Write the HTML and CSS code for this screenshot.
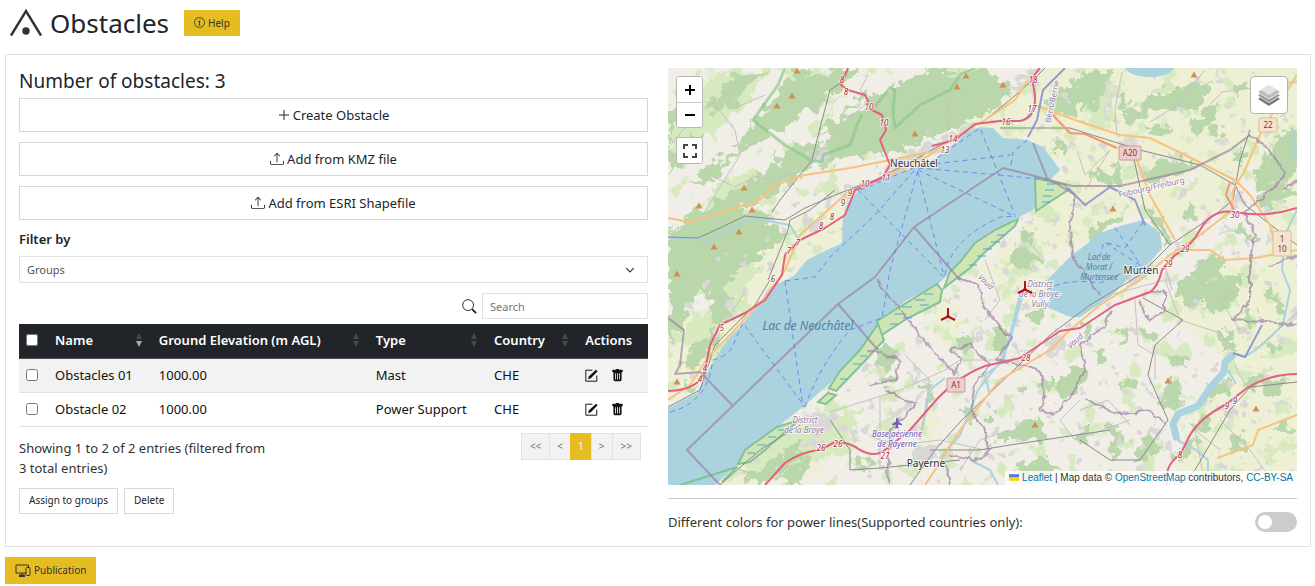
FILE: index.html
```html
<!DOCTYPE html>
<html lang="en">
<head>
  <meta charset="utf-8">
  <meta name="viewport" content="width=device-width, initial-scale=1">
  <title>Obstacles</title>
  <link rel="stylesheet" href="styles.css">
</head>
<body>
  <svg class="sprite" aria-hidden="true">
    <symbol id="upload" viewBox="0 0 16 16">
      <path d="M.5 9.9a.5.5 0 0 1 .5.5v2.5a1 1 0 0 0 1 1h12a1 1 0 0 0 1-1v-2.5a.5.5 0 0 1 1 0v2.5a2 2 0 0 1-2 2H2a2 2 0 0 1-2-2v-2.5a.5.5 0 0 1 .5-.5"/>
      <path d="M7.646 1.146a.5.5 0 0 1 .708 0l3 3a.5.5 0 0 1-.708.708L8.5 2.707V11.500a.5.5 0 0 1-1 0V2.707L5.354 4.854a.5.5 0 1 1-.708-.708z"/>
    </symbol>
    <symbol id="edit" viewBox="0 0 16 16">
      <path d="M9 1.500H1V15H14.500V8" fill="none" stroke="currentColor" stroke-width="1.200"/>
      <path d="M13.500 .8l2 2-8.300 8.500-3.400 1.200 1.100-3.500z"/>
    </symbol>
    <symbol id="trash" viewBox="0 0 16 16">
      <path d="M2.500 1a1 1 0 0 0-1 1v1a1 1 0 0 0 1 1H3v9a2 2 0 0 0 2 2h6a2 2 0 0 0 2-2V4h.5a1 1 0 0 0 1-1V2a1 1 0 0 0-1-1H10a1 1 0 0 0-1-1H7a1 1 0 0 0-1 1zm3 4a.5.5 0 0 1 .5.5v7a.5.5 0 0 1-1 0v-7a.5.5 0 0 1 .5-.5M8 5a.5.5 0 0 1 .5.5v7a.5.5 0 0 1-1 0v-7A.5.5 0 0 1 8 5m3 .5v7a.5.5 0 0 1-1 0v-7a.5.5 0 0 1 1 0"/>
    </symbol>
    <symbol id="sort" viewBox="0 0 8 14">
      <path d="M4 0l3 6H1z"/>
      <path d="M1 8h6l-3 6z"/>
    </symbol>
    <symbol id="sort-desc" viewBox="0 0 8 14">
      <path d="M4 0l3 6H1z" fill="#45494d"/>
      <path d="M1 8h6l-3 6z"/>
    </symbol>
  </svg>

  <header class="page-header">
    <svg class="logo" viewBox="0 0 32 28"><path d="M1 26.500L16 2l15 24.500" fill="none" stroke="#333" stroke-width="2.400"/><circle cx="16" cy="22" r="3.700" fill="#333"/></svg>
    <h1>Obstacles</h1>
    <button class="btn btn-yellow" type="button">
      <svg class="icon-sm" viewBox="0 0 16 16"><circle cx="8" cy="8" r="7.300" fill="none" stroke="currentColor" stroke-width="1.200"/><path d="M6 6.500h2.500L7.400 12h1.800M8.800 3.400v1.400" fill="none" stroke="currentColor" stroke-width="1.400"/></svg>
      Help
    </button>
  </header>

  <main class="panel">
    <section class="column">
      <h2>Number of obstacles: 3</h2>
      <div class="create-group">
        <button class="btn-wide" type="button">
          <svg class="icon-plus" viewBox="0 0 12 12"><path d="M6 1v10M1 6h10" stroke="currentColor"/></svg>
          Create Obstacle
        </button>
        <button class="btn-wide" type="button"><svg class="icon"><use href="#upload"/></svg>Add from KMZ file</button>
        <button class="btn-wide" type="button"><svg class="icon"><use href="#upload"/></svg>Add from ESRI Shapefile</button>
      </div>

      <label class="filter-label" for="groups">Filter by</label>
      <select id="groups" class="filter-select">
        <option>Groups</option>
      </select>

      <div class="search-row">
        <label for="search" aria-label="Search">
          <svg class="icon-search" viewBox="0 0 16 16"><circle cx="6.500" cy="6.500" r="5.800" fill="none" stroke="currentColor"/><path d="M10.800 10.800l4.200 4.200" stroke="currentColor" stroke-width="2"/></svg>
        </label>
        <input type="text" id="search" placeholder="Search">
      </div>

      <table class="obstacles">
        <colgroup>
          <col class="col-check"><col class="col-name"><col class="col-elevation"><col class="col-type"><col class="col-country"><col>
        </colgroup>
        <thead>
          <tr>
            <th><input type="checkbox" aria-label="Select all"></th>
            <th><div class="th-inner">Name <svg class="sort sorted"><use href="#sort-desc"/></svg></div></th>
            <th><div class="th-inner">Ground Elevation (m AGL) <svg class="sort"><use href="#sort"/></svg></div></th>
            <th><div class="th-inner">Type <svg class="sort"><use href="#sort"/></svg></div></th>
            <th><div class="th-inner">Country <svg class="sort"><use href="#sort"/></svg></div></th>
            <th>Actions</th>
          </tr>
        </thead>
        <tbody>
          <tr>
            <td><input type="checkbox" aria-label="Select Obstacles 01"></td>
            <td>Obstacles 01</td>
            <td>1000.00</td>
            <td>Mast</td>
            <td>CHE</td>
            <td>
              <div class="actions">
                <button type="button" aria-label="Edit"><svg><use href="#edit"/></svg></button>
                <button type="button" aria-label="Delete"><svg><use href="#trash"/></svg></button>
              </div>
            </td>
          </tr>
          <tr>
            <td><input type="checkbox" aria-label="Select Obstacle 02"></td>
            <td>Obstacle 02</td>
            <td>1000.00</td>
            <td>Power Support</td>
            <td>CHE</td>
            <td>
              <div class="actions">
                <button type="button" aria-label="Edit"><svg><use href="#edit"/></svg></button>
                <button type="button" aria-label="Delete"><svg><use href="#trash"/></svg></button>
              </div>
            </td>
          </tr>
        </tbody>
      </table>

      <div class="table-footer">
        <p>Showing 1 to 2 of 2 entries (filtered from 3 total entries)</p>
        <nav class="pagination" aria-label="Pages">
          <button type="button">&lt;&lt;</button>
          <button type="button">&lt;</button>
          <button type="button" class="active">1</button>
          <button type="button">&gt;</button>
          <button type="button">&gt;&gt;</button>
        </nav>
      </div>

      <div class="bulk-actions">
        <button class="btn btn-outline" type="button">Assign to groups</button>
        <button class="btn btn-outline" type="button">Delete</button>
      </div>
    </section>

    <section class="column">
      <div class="map">
        <svg class="map-tiles" viewBox="668 68 629 417" preserveAspectRatio="xMidYMid slice" role="img" aria-label="Map of Lac de Neuchâtel">
          <defs>
            <filter id="rough" x="-5%" y="-5%" width="110%" height="110%">
              <feTurbulence type="fractalNoise" baseFrequency=".09" numOctaves="3" seed="4" result="noise"/>
              <feDisplacementMap in="SourceGraphic" in2="noise" scale="24" xChannelSelector="R" yChannelSelector="G"/>
            </filter>
            <filter id="wiggle" x="-5%" y="-5%" width="110%" height="110%">
              <feTurbulence type="fractalNoise" baseFrequency=".12" numOctaves="2" seed="9" result="noise"/>
              <feDisplacementMap in="SourceGraphic" in2="noise" scale="7" xChannelSelector="R" yChannelSelector="G"/>
            </filter>
            <filter id="speckle" x="0" y="0" width="100%" height="100%" color-interpolation-filters="sRGB">
              <feTurbulence type="fractalNoise" baseFrequency=".05" numOctaves="4" seed="12"/>
              <feColorMatrix values="0 0 0 0 0  0 0 0 0 0  0 0 0 0 0  14 0 0 0 -8.400" result="spots"/>
              <feComposite in="SourceGraphic" in2="spots" operator="in"/>
            </filter>
            <filter id="speckle-fine" x="0" y="0" width="100%" height="100%" color-interpolation-filters="sRGB">
              <feTurbulence type="fractalNoise" baseFrequency=".08" numOctaves="3" seed="31"/>
              <feColorMatrix values="0 0 0 0 0  0 0 0 0 0  0 0 0 0 0  0 16 0 0 -10.900" result="spots"/>
              <feComposite in="SourceGraphic" in2="spots" operator="in"/>
            </filter>
            <path id="peak" d="M0-3.500L3.500 2.500h-7z"/>
            <g id="turbine"><path d="M0-7V1.500M0 1.500L-7 5M0 1.500L7 5" fill="none" stroke="#b0121b" stroke-width="2"/><circle cy="1.500" r="1.800" fill="#b0121b"/></g>
          </defs>

          <rect x="668" y="68" width="629" height="417" fill="#f1eee8"/>

          <!-- farmland -->
          <g class="farmland" filter="url(#rough)">
            <path d="M960 125L1040 60H1310V150L1240 175 1215 215 1160 225 1140 210 1100 230 1040 260 975 285 1000 250 1050 200 1062 165 1030 145z"/>
            <path d="M668 395V325L720 300 770 240 800 215 850 200 845 240 780 280 740 325 700 380z"/>
            <path d="M935 290L955 300 965 340 945 345 930 320zM985 265L1040 245 1045 300 1010 310z"/>
            <path d="M1160 310L1205 262 1300 270V485H1170L1180 450 1200 400 1240 360 1200 340z"/>
            <path d="M715 485L800 430 850 440 800 485zM910 420l20-15 10 20-15 30zM1270 170L1300 150V280H1260z"/>
          </g>

          <!-- meadows -->
          <g class="meadow" filter="url(#rough)">
            <path d="M668 165V120L720 72 780 68 760 95 715 130zM690 220L720 180 765 170 745 200zM668 275V238L700 225 710 260z"/>
            <path d="M668 340L710 305 735 245 755 255 745 300 710 350zM780 68H850L800 130 770 125zM880 120L940 68H985L925 120zM1085 80L1110 70 1110 130 1085 120z"/>
            <path d="M740 465L800 425 860 410 850 440 790 475zM800 120L845 90 840 100 815 140zM1015 260L1050 240 1035 270 1005 285z"/>
          </g>
          <rect class="meadow" x="668" y="68" width="629" height="417" filter="url(#speckle)"/>

          <!-- forest -->
          <g class="forest" filter="url(#rough)">
            <path d="M668 230L720 200 800 150 860 95 880 68H960L940 85 900 115 885 150 840 160 800 180 750 205 700 225z"/>
            <path d="M668 345V235L700 215 755 210 790 235 740 270 715 300 700 290z"/>
            <path d="M668 140L690 100 690 90 668 110zM690 185L770 105 795 68H808L790 110 750 150 730 175z"/>
            <path d="M757 122L800 80 830 68H862L840 90 810 115 775 130zM770 160L830 130 860 135 820 165z"/>
            <path d="M668 160L695 130 700 145 672 175zM700 110l35-35 35-7-40 40z"/>
            <path d="M886 155L890 120 930 85 985 68 1000 80 1012 92 990 110 960 125 920 143z"/>
            <path d="M1040 105L1095 68H1110L1100 95 1060 120zM1080 70H1110L1098 105 1085 112z"/>
            <path d="M1115 115L1190 80 1215 85 1195 108 1155 110 1130 125zM1190 125L1217 100 1217 120 1195 140z"/>
            <path d="M1145 170L1185 155 1190 170 1160 180 1140 183zM1100 180L1120 155 1118 190zM1092 225L1125 212 1120 225 1085 240z"/>
            <path d="M1255 180L1275 135 1300 130V160L1285 200 1260 210zM1145 205L1165 225 1175 245 1165 248z"/>
            <path d="M1195 265L1220 250 1225 285 1190 310 1175 290zM1200 290L1245 270 1235 300 1215 320z"/>
            <path d="M1196 285L1240 280 1235 298 1210 315zM1222 330L1235 325 1237 345 1222 350z"/>
            <path d="M1170 375L1185 385 1180 410 1155 400zM1108 425L1120 425 1122 450 1110 455zM1058 400L1080 390 1090 370 1075 365 1055 385z"/>
            <path d="M1000 430L1040 415 1045 440 1000 440zM1020 463L1050 455 1060 470 1030 485H1010zM880 345L900 345 890 370 875 365z"/>
            <path d="M740 475L775 458 800 440 805 455 760 485zM770 480L810 455 805 485zM1000 195L1030 175 1045 190 1020 210z"/>
            <path d="M690 345L720 325 715 350 700 365 680 370zM710 290l25 5-8 25-15 5zM1010 255L1030 240 1040 262 1015 275z"/>
            <path d="M1060 270l30-12v12l-25 10zM1135 445l20-8 5 15-25 10zM1210 385l20-6-5 18-18 3zM1255 375l35 8-12 12-30-8z"/>
            <path d="M1180 445l20-5-4 15-22 4zM1230 440l14-5-4 20-14-4zM1120 265l15 8-12 8z"/>
            <path d="M960 340l12-3-4 18-9-2zM917 380l12 2-6 10zM1080 330l15-8-5 15z"/>
          </g>

          <!-- clearings -->
          <g class="clearing" filter="url(#rough)">
            <path d="M690 218L740 150 765 143 720 185zM718 170L780 90 790 68H772L740 110zM765 145L805 110 835 105 790 145zM805 140l25-12-8 18zM890 92l35-24H870l-15 20z"/>
            <path d="M1172 180l30-10-6 10zM1110 360l20-10-8 15zM862 440l15 7-16 8zM1195 228l15-4-10 12z"/>
            <path d="M735 125l22-25 4 6-20 24zM840 118l25-22 6 8-26 18zM798 172l24-9-5 12-16 5z"/>
          </g>

          <!-- towns -->
          <g class="town" filter="url(#rough)">
            <path d="M885 165L950 135 975 125 970 133 930 155 885 175zM840 190l30-10-6 12-18 10zM803 220l25-8-20 22zM812 155l12-8 4 15-16 5zM1007 85l25-15 10 8-22 12z"/>
            <path d="M1119 137h18l-2 14-17 2zM1165 150h20l-10 9zM1232 190l12 5-8 17zM1140 265l15-3-14 22-12-2zM1043 345l18-15 4 18-20 8zM918 450l24-7-2 18-30 6z"/>
            <path d="M798 418l35-6 6 12-24 15zM903 372l20-2-8 8zM878 418l24-12 10 4-24 8zM1146 385l15 15-10-3zM1224 405l14-7-2 20-12-2zM1283 315l14-6v18z"/>
            <path d="M966 333l18-2-6 12zM860 433l12-7-4 14zM940 302l12-7v8zM1008 363l20-10-6 12zM1105 90l14 3-10 12zM1150 425l12 5-10 8zM1222 223l8 10-10 3z"/>
          </g>
          <path class="town" filter="url(#speckle-fine)" d="M668 300L760 220 900 150 1010 70H1297V485H668z"/>

          <!-- small groves scattered over the farmland -->
          <g class="groves" filter="url(#rough)">
            <path d="M1000 330v18M1015 392h12M1030 320l14-8M985 420h12M1085 430v14M1140 330l14 7M1165 360h20M1190 425h20M1240 435v18M1270 340v14M1280 425l12 8M860 462h16M880 382h16M930 390v12M960 412h13M1120 385h14M1125 330v16M1250 310v16M1270 290l10 20M1100 350v14"/>
            <path d="M1060 140v16M1090 175h14M1125 95v14M1150 130h18M1235 90l14-8M1210 135l10-6M1240 225l10 16M1190 205v14M1020 235h16M1245 150l-9 12M1040 385l14-5M715 230v10M690 385v10M740 345l10-10"/>
          </g>

          <!-- water -->
          <path class="water" d="M668 408L697 393 710 367 727 340 740 327 757 307 770 287 793 277 807 260 827 250 842 243 843 217 848 203 860 190 880 181 897 173 930 163 950 147 967 132 980 127 993 128 1003 138 1027 140 1043 147 1053 160 1060 170 1050 180 1043 197 1033 210 1017 218 997 230 970 250 950 273 937 285 907 300 880 320 860 350 830 383 803 407 777 427 757 440 737 465 715 485H668z"/>
          <path class="water" d="M1047 280L1070 257 1088 243 1100 233 1120 226 1143 220 1160 233 1162 248 1152 260 1130 277 1110 297 1080 317H1070L1047 307 1051 293zM1125 68q6 9 25 9t24-9z"/>
          <g class="river">
            <path class="river-wide" d="M1234 354L1225 362 1224 372 1210 388 1198 406 1178 414 1173 424 1177 440"/>
            <path d="M1177 440L1196 450 1208 460 1208 482M1024 290L1010 340 1000 362 978 390 970 410 960 435 940 458M1020 295L1003 362 985 375 990 395M945 378L930 390 922 430M668 238L700 238 705 243 750 218 790 225 800 242"/>
            <path d="M1295 130L1291 146 1299 165M1297 210L1285 235 1282 270 1290 290 1283 325 1262 345 1245 357 1233 353M970 460L990 470 998 485M1228 370l8 14"/>
          </g>

          <!-- reserves along the shore -->
          <g class="reserve">
            <path d="M1035 178L1065 185 1068 190 1036 211z"/>
            <path d="M877 321L937 284 942 290 940 302 908 318 880 336z"/>
            <path d="M944 288L970 268 985 252 1015 226 1018 219 995 230 975 243 960 262 950 272z"/>
            <path d="M878 324L860 350 840 371 829 388 836 391 862 364 884 340z"/>
            <path d="M818 402l10-9 8 2-10 9z"/>
            <path d="M738 464L745 450 777 427 800 420 785 432 765 450 750 462z"/>
            <path class="reserve-line" d="M680 485L737 467 722 482"/>
          </g>
          <g class="reed">
            <path d="M1047 184h8m-10 6h9m-11 6h9m-10 6h8"/>
            <path d="M997 235h8m-14 7h9m-17 7h9m-15 7h9m-17 9h8"/>
            <path d="M924 294h9m-18 6h10m-5 5h9m-27 2h10m-18 7h10m-1 4h9m-22 6h8"/>
            <path d="M860 356h7m-14 8h8m-21 15h8m-70 51h8m-18 7h8m-19 8h9m-19 8h8"/>
          </g>

          <!-- minor roads -->
          <path class="minor" d="M668 148L700 110 760 75M700 219L740 155 735 130 715 105M668 157L702 150M710 175L735 187 757 176 770 180 800 172M765 95L735 108M880 110L860 90 868 75M810 165L840 125 865 105M720 330L745 292M949 98V130"/>
          <path class="minor" d="M1117 135L1115 110 1122 72M1150 122L1175 107 1205 70M1200 115L1222 92 1297 82M1085 190L1110 150 1085 175 1077 150M1110 295L1165 280 1180 320 1220 333 1235 352M1135 300L1138 345 1155 355 1155 380M1220 420L1250 450 1275 485M1165 265L1172 290M1235 365L1245 385"/>
          <path class="minor" d="M1020 230L1030 243 1045 260M830 412L900 390 945 370 960 360 1010 360M870 437L900 445 940 440 985 450M880 395L880 470M985 320L1000 300 985 260M1080 400L1060 420 1075 440 1130 420M1130 425L1108 400 1080 410M1220 450L1195 430 1205 485M1255 350L1300 310M1240 330L1220 300 1240 290M960 470L980 440 1010 430M905 355L930 380 920 440"/>

          <!-- railways -->
          <path class="rail" d="M668 237L698 238 720 228 745 216 785 220 805 208 840 193 875 180 905 165 950 140 985 120 1010 100 1035 78 1045 68M820 128L830 90 845 80M820 128L812 160 780 200 772 212M768 280L788 230 790 220 810 210 835 190M1000 128L1070 128 1140 150 1200 165 1235 185 1245 205 1297 245M770 280L755 305 715 345 700 390 668 407"/>
          <path class="rail" d="M1132 150L1145 210 1170 245M1250 130L1240 160 1233 200 1215 215 1170 245 1140 275 1090 305 1050 335 960 422 935 450 910 485M1143 298L1183 320 1155 345 1148 375 1168 420 1140 460 1110 460 1080 440M720 485L760 450 800 425M830 420L850 450 850 470 880 468 960 460M930 450L980 450 1010 445 1110 430M1297 382L1250 387 1230 410 1195 470 1180 485"/>

          <!-- secondary roads -->
          <path class="primary" d="M668 218L690 222 730 210 760 200 775 185 805 175 850 168 880 162 930 152M760 305L785 270 800 235 845 195 890 175 930 155 950 140 985 120 1015 100 1028 80M668 400L690 385 710 355 730 335 760 302M1035 105L1075 120 1120 135 1150 138 1185 155 1235 180 1250 195 1270 225 1275 245M1135 155L1150 195 1175 240"/>
          <path class="primary" d="M1297 75L1262 130 1245 170 1233 190 1232 210 1200 235 1170 255 1140 280 1100 305 1070 330 1050 350 1000 380 960 430 935 470 925 485M1175 250L1210 250 1225 260 1255 258 1297 250M1217 458L1253 445 1258 430 1297 415"/>
          <path class="trunk" d="M1050 112L1070 133 1085 134 1117 148M1230 182L1226 195 1234 210"/>

          <!-- ridge trails -->
          <path class="trail" d="M785 68L778 85 753 120 785 145 810 160 822 162 823 155 850 145 857 125 862 114M870 112L890 88 895 90 893 112 895 128 920 105 950 90 960 75 975 68"/>

          <!-- ferry lines -->
          <g class="ferry">
            <path d="M670 412Q700 405 710 375L713 360Q732 355 735 340L743 323 805 407M785 281L803 407M785 281L815 277 830 257 875 215 920 164M805 407Q820 365 850 330L882 318 890 270 918 170M918 170L1016 217M918 168L1000 175 1048 180M918 166L1010 155M1011 165L1013 152 1030 138M918 172L943 272M858 190L945 278M945 275Q950 240 1000 217L1016 216M930 163L980 128 1015 215M860 190L920 165"/>
            <path d="M1140 265L1104 242 1098 262M1143 222L1125 248 1104 242M1115 228L1141 265M1047 290Q1065 278 1100 283L1140 265"/>
          </g>

          <!-- cantonal and district boundaries -->
          <g class="boundary">
            <path d="M668 318L684 330 680 365 675 374 700 372 732 405M720 485L687 450 838 304 875 277 914 227 1003 168 1050 180 1072 186 1120 186 1190 170 1230 150 1250 135"/>
            <path d="M838 304L878 350M914 227L960 280M1033 143L1047 178 1075 195"/>
          </g>
          <g class="boundary" filter="url(#wiggle)">
            <path d="M875 278L910 322 925 342 955 375 960 358 950 350 970 345 990 365 975 385 970 410 985 430 990 450 980 460 950 455M958 278L980 285 982 305 1012 340 995 360 1025 365 1040 370 1045 395 1040 410 1055 415 1075 390 1085 370 1080 345 1105 325 1110 310"/>
            <path d="M868 350L900 360 895 380 870 385M885 390L915 405 890 430 888 485M945 460L950 485M1075 195L1070 225 1072 255 1100 295M1250 135L1270 150 1285 175 1260 200 1245 212 1255 235 1250 260 1250 300 1232 320 1265 322 1297 325M1270 265L1300 255M1140 295L1165 290 1165 310 1150 320 1138 300M1297 180L1285 188M1085 400L1120 415 1150 410 1165 425"/>
          </g>
          <path class="canal" d="M1065 68L1043 90 1037 120 1028 137M1068 188L1085 205 1110 187 1135 200 1145 225M1262 325L1245 357 1233 353"/>

          <!-- motorways -->
          <path class="motorway" d="M848 68L841 85 848 90 865 95 872 110 882 115 886 130 880 140 890 165 882 178 855 190 845 215 825 228 800 240 785 255 782 275 765 300 745 313 720 325 710 345 705 370Q700 390 668 391"/>
          <path class="motorway" d="M932 146L955 140 975 124 1000 121 1020 121Q1036 118 1035 95L1032 78 1040 68M765 485L785 463Q800 452 820 450L835 442Q850 442 860 450Q875 458 885 450L910 430 938 398Q960 375 985 366L1020 358 1060 331 1080 328 1115 305 1150 292Q1158 287 1162 270L1175 255Q1190 248 1200 230Q1212 208 1235 212Q1265 218 1297 208M1167 485Q1164 465 1180 455L1190 435Q1200 418 1225 405L1247 388Q1270 374 1297 374"/>

          <!-- peaks -->
          <g fill="#d08f55">
            <use href="#peak" x="797" y="71"/><use href="#peak" x="792" y="96"/><use href="#peak" x="777" y="106"/><use href="#peak" x="744" y="188"/><use href="#peak" x="699" y="206"/><use href="#peak" x="752" y="210"/><use href="#peak" x="739" y="232"/><use href="#peak" x="714" y="247"/><use href="#peak" x="677" y="274"/><use href="#peak" x="677" y="382"/>
            <use href="#peak" x="966" y="76"/><use href="#peak" x="957" y="87"/><use href="#peak" x="1003" y="85"/><use href="#peak" x="915" y="134"/><use href="#peak" x="1194" y="75"/><use href="#peak" x="1113" y="209"/><use href="#peak" x="1168" y="381"/><use href="#peak" x="1256" y="409"/><use href="#peak" x="1035" y="425"/>
          </g>

          <!-- motorway exits -->
          <g class="exit">
            <text x="842" y="83">8</text><text x="846" y="95">8</text><text x="869" y="110">10</text><text x="884" y="126">10</text><text x="865" y="187">10</text><text x="886" y="181">11</text><text x="945" y="153">13</text><text x="953" y="142">14</text><text x="1006" y="125">16</text><text x="1032" y="112">17</text><text x="1033" y="83">18</text>
            <text x="850" y="196">9</text><text x="843" y="206">9</text><text x="832" y="220">8</text><text x="821" y="229">8</text><text x="798" y="246">7</text><text x="789" y="254">7</text><text x="773" y="282">6</text><text x="722" y="331">5</text><text x="705" y="371">4</text><text x="700" y="382">4</text>
            <text x="821" y="451">26</text><text x="838" y="447">26</text><text x="885" y="459">27</text><text x="1026" y="361">28</text><text x="1185" y="252">29</text><text x="1168" y="267">29</text><text x="1235" y="218">30</text><text x="1227" y="409">9</text><text x="1235" y="404">9</text><text x="1180" y="458">8</text>
          </g>

          <!-- road shields -->
          <g class="shield">
            <rect x="1119" y="146" width="22" height="14" rx="1"/><text x="1130" y="156">A20</text>
            <rect x="947" y="378" width="18" height="14" rx="1"/><text x="956" y="388">A1</text>
            <rect class="light" x="1259" y="118" width="18" height="14" rx="1"/><text x="1268" y="128">22</text>
            <rect class="light" x="1273" y="231" width="18" height="25" rx="1"/><text x="1282" y="242">1</text><text x="1282" y="252">10</text>
          </g>

          <!-- place names -->
          <g class="place">
            <text x="914" y="167">Neuchâtel</text><text x="1141" y="274">Murten</text><text x="926" y="467">Payerne</text>
          </g>
          <g class="lake-name">
            <text class="large" x="808" y="330">Lac de Neuchâtel</text>
            <text x="1099" y="260">Lac de</text><text x="1099" y="270">Morat /</text><text x="1099" y="280">Murtensee</text>
          </g>
          <g class="district">
            <text x="805" y="423">District</text><text x="804" y="433">de la Broye</text>
            <text x="1040" y="287">District</text><text x="1040" y="297">de la Broye-</text><text x="1040" y="307">Vully</text>
            <text transform="translate(984 284) rotate(45)">Vaud</text><text transform="translate(1077 343) rotate(-43)">Vaud</text>
            <text class="canton" transform="translate(1152 190) rotate(-13)">Fribourg/Freiburg</text><text class="canton" transform="translate(1055 102) rotate(-78)">Bern/Berne</text>
          </g>
          <g class="airport">
            <text x="897" y="437">Base aérienne</text><text x="897" y="447">de Payerne</text>
            <path d="M897 417l1 2v2.500l4 2.500v1.200l-4-.8v2.500l1.500 1.300h-5l1.500-1.300v-2.500l-4 .8V424l4-2.500v-2.500z"/>
          </g>

          <use href="#turbine" x="948" y="315"/>
          <use href="#turbine" x="1025" y="288"/>
        </svg>

        <div class="map-controls">
          <div class="map-bar">
            <button type="button" aria-label="Zoom in"><svg viewBox="0 0 12 12"><path d="M6 1v10M1 6h10"/></svg></button>
            <button type="button" aria-label="Zoom out"><svg viewBox="0 0 12 12"><path d="M1 6h10"/></svg></button>
          </div>
          <div class="map-bar">
            <button type="button" aria-label="Full screen"><svg class="fullscreen" viewBox="0 0 14 14"><path d="M1 5V1h4M9 1h4v4M13 9v4H9M5 13H1V9"/></svg></button>
          </div>
        </div>
        <button class="map-layers" type="button" aria-label="Layers">
          <svg viewBox="0 0 26 26">
            <path d="M2 17l11 7 11-7-2-1.500-9 5.500-9-5.500z" fill="#777"/>
            <path d="M2 13.500l11 7 11-7-2-1.500-9 5.500L4 12z" fill="#999"/>
            <path d="M13 3l11 7-11 7-11-7z" fill="#bbb"/>
            <path d="M13 3l8 5-8 5-8-5z" fill="#e2e2e2"/>
          </svg>
        </button>
        <div class="map-credit">
          <svg viewBox="0 0 12 8"><path d="M0 0h12v4H0z" fill="#4c7be1"/><path d="M0 4h12v4H0z" fill="#ffd500"/></svg>
          <a href="#">Leaflet</a> | Map data © <a href="#">OpenStreetMap</a> contributors, <a href="#">CC-BY-SA</a>
        </div>
      </div>

      <div class="map-option">
        <label for="power-colors">Different colors for power lines(Supported countries only):</label>
        <input type="checkbox" id="power-colors" class="switch">
      </div>
    </section>
  </main>

  <button class="btn btn-yellow btn-publication" type="button">
    <svg class="icon-devices" viewBox="0 0 16 14"><path d="M11 10H1V2h12.500v2M4 12.500h6M7 10v2.500" fill="none" stroke="currentColor"/><rect x="11" y="4.500" width="4" height="8" rx="1" fill="none" stroke="currentColor"/><path d="M4 11.500h6V14H4z"/></svg>
    Publication
  </button>
</body>
</html>
```
FILE: styles.css
```css
* {
  box-sizing: border-box;
}

body {
  margin: 0;
  padding: 9px 4px 2px 5px;
  font-family: "Noto Sans", "Open Sans", sans-serif;
  font-size: 13px;
  line-height: 20px;
  color: #212529;
  background: #fff;
}

button,
input,
select {
  font-family: inherit;
  color: inherit;
}

button {
  cursor: pointer;
}

svg {
  fill: currentColor;
}

.sprite {
  display: none;
}

/* Header */
.page-header {
  display: flex;
  align-items: center;
  height: 28px;
  margin-bottom: 17px;
  padding-left: 5px;
}

.logo {
  width: 32px;
  height: 28px;
}

h1 {
  margin: 0 15px 0 8px;
  font-size: 26px;
  line-height: 28px;
  font-weight: 400;
}

h2 {
  margin: 0 0 4px;
  font-size: 19px;
  line-height: 26px;
  font-weight: 400;
}

.btn {
  display: inline-flex;
  align-items: center;
  justify-content: center;
  height: 26px;
  padding: 0 9px 1px;
  border: 1px solid #dee2e6;
  background: #fff;
  font-size: 10px;
}

.btn-yellow {
  gap: 3px;
  border-color: #e6bd21;
  background: #e6bd21;
  color: #333;
}

.btn-publication {
  height: 27px;
  margin-top: 10px;
}

.btn-outline {
  border-color: #d8dadd;
}

.icon-sm {
  width: 11px;
  height: 11px;
}

.icon-devices {
  width: 16px;
  height: 14px;
}

/* Main panel */
.panel {
  display: grid;
  grid-template-columns: 1fr 1fr;
  gap: 20px;
  padding: 13px 13px 14px;
  border: 1px solid #dee2e6;
}

.create-group {
  display: grid;
  gap: 10px;
}

.btn-wide {
  display: flex;
  align-items: center;
  justify-content: center;
  gap: 3px;
  height: 34px;
  padding: 0 6px 1px;
  border: 1px solid #d5d7da;
  background: #fff;
  font-size: 13px;
}

.icon {
  width: 14px;
  height: 14px;
}

.icon-plus {
  width: 12px;
  height: 12px;
}

.filter-label {
  display: block;
  margin: 9px 0 7px;
  font-weight: 600;
}

.filter-select {
  display: block;
  width: 100%;
  height: 27px;
  padding: 0 7px;
  border: 1px solid #dee2e6;
  border-radius: 0;
  appearance: none;
  background: #fff url("data:image/svg+xml,%3Csvg xmlns='http://www.w3.org/2000/svg' viewBox='0 0 16 16'%3E%3Cpath fill='none' stroke='%23343a40' stroke-width='2' d='M2 5l6 6 6-6'/%3E%3C/svg%3E") no-repeat right 12px center / 10px;
  color: #555;
  font-size: 11px;
}

.search-row {
  display: flex;
  align-items: center;
  justify-content: flex-end;
  gap: 5px;
  margin: 10px 0 5px;
}

.search-row label {
  display: flex;
}

.search-row input {
  width: 166px;
  height: 26px;
  padding: 0 7px;
  border: 1px solid #dee2e6;
  font-size: 11px;
}

.icon-search {
  width: 15px;
  height: 15px;
}

/* Table */
.obstacles {
  width: 100%;
  table-layout: fixed;
  border-collapse: collapse;
  color: #111;
}

.col-check { width: 28px; }
.col-name { width: 16.5%; }
.col-elevation { width: 34.5%; }
.col-type { width: 18.8%; }
.col-country { width: 14.5%; }

.obstacles th,
.obstacles td {
  height: 34px;
  padding: 0 8px;
  border-bottom: 1px solid #dee2e6;
  text-align: left;
  white-space: nowrap;
}

.obstacles th {
  padding-bottom: 2px;
  border-bottom-color: #4d5154;
  background: #212529;
  color: #fff;
  font-weight: 600;
}

.obstacles tbody tr:nth-child(odd) {
  background: #f2f2f2;
}

.obstacles th:first-child,
.obstacles td:first-child {
  padding-left: 7px;
}

.obstacles input {
  display: block;
  width: 12px;
  height: 12px;
  margin: 0;
}

.th-inner {
  display: flex;
  align-items: center;
  justify-content: space-between;
}

.sort {
  width: 8px;
  height: 14px;
  color: #45494d;
}

.sort.sorted {
  color: #aaa;
}

.actions {
  display: flex;
  gap: 13px;
}

.actions button {
  display: flex;
  padding: 0;
  border: 0;
  background: none;
}

.actions svg {
  width: 13px;
  height: 13px;
}

.table-footer {
  display: flex;
  justify-content: space-between;
  align-items: flex-start;
  margin-bottom: 10px;
  padding: 6px 7px 0 0;
}

.table-footer p {
  width: 250px;
  margin: 5px 0 0;
  color: #333;
}

.pagination {
  display: flex;
}

.pagination button {
  height: 27px;
  padding: 0 7px;
  border: 1px solid #dee2e6;
  border-right-width: 0;
  background: #f2f2f2;
  color: #777;
  font-size: 10px;
}

.pagination button:first-child,
.pagination button:last-child {
  padding: 0 8px;
}

.pagination button:last-child {
  border-right-width: 1px;
}

.pagination .active {
  border-color: #e6bd21;
  background: #e6bd21;
  color: #fff;
}

.bulk-actions {
  display: flex;
  gap: 6px;
}

/* Map */
.map {
  position: relative;
  height: 417px;
  overflow: hidden;
  background: #f1eee8;
}

.map-tiles {
  display: block;
  width: 100%;
  height: 100%;
}

.farmland { fill: #eef0d5; }
.meadow { fill: #d7eabf; }
.forest { fill: #bad7ac; }
.clearing { fill: #f1eee8; }
.town { fill: #d9d8d6; }
.water { fill: #aad3df; }

.groves {
  fill: none;
  stroke: #bad7ac;
  stroke-width: 9;
}

.river,
.minor,
.rail,
.primary,
.trunk,
.trail,
.ferry,
.boundary,
.canal,
.motorway,
.reed {
  fill: none;
  stroke-linejoin: round;
}

.river { stroke: #aad3df; stroke-width: 2; }
.river-wide { stroke-width: 7; }
.minor { stroke: #c4c2c2; stroke-width: 1; }
.rail { stroke: #8a8a88; stroke-width: 1; }
.primary { stroke: #f8c27c; stroke-width: 2; }
.trunk { stroke: #f79475; stroke-width: 2; }
.trail { stroke: #8ec78f; stroke-width: 3; opacity: .7; }
.ferry { stroke: #7187ee; stroke-width: 1; stroke-dasharray: 5 4; }
.boundary { stroke: #9b7ba0; stroke-width: 2; opacity: .65; }
.canal { stroke: #7f86cf; stroke-width: 2; opacity: .8; }
.motorway { stroke: #e4607f; stroke-width: 2; }
.reed { stroke: #4da6e0; stroke-width: 1; }

.reserve {
  fill: #cfe6b4;
  stroke: #83c197;
  stroke-width: 2;
}

.reserve-line {
  fill: none;
}

.map-tiles text {
  text-anchor: middle;
  paint-order: stroke;
  stroke: rgba(255, 255, 255, .7);
  stroke-width: 2px;
  font-size: 8px;
}

.exit { fill: #a8303f; font-style: italic; }
.map-tiles .shield text { fill: #704038; stroke: none; }
.shield rect { fill: #f0cccb; stroke: #cf9a95; }
.shield .light { fill: #f6e3ce; stroke: #d9bd9a; }
.map-tiles .place text { fill: #333; font-size: 10px; }
.lake-name { fill: #5380aa; font-style: italic; }
.map-tiles .lake-name text { stroke: none; }
.map-tiles .lake-name .large { font-size: 12px; }
.district { fill: #997aa6; font-style: italic; }
.map-tiles .canton { font-size: 8px; font-style: normal; }
.airport { fill: #7359b9; font-style: italic; }

.map-controls {
  position: absolute;
  top: 8px;
  left: 8px;
  display: grid;
  gap: 9px;
}

.map-bar {
  border: 1px solid #b8b8b0;
  border-radius: 3px;
  background: #fff;
  overflow: hidden;
}

.map-bar button {
  display: flex;
  align-items: center;
  justify-content: center;
  width: 25px;
  height: 25px;
  padding: 0;
  border: 0;
  background: #fff;
}

.map-bar button + button {
  border-top: 1px solid #ccc;
}

.map-bar svg {
  width: 12px;
  height: 12px;
  fill: none;
  stroke: #000;
  stroke-width: 2;
}

.map-bar .fullscreen {
  width: 14px;
  height: 14px;
  stroke: #444;
}

.map-layers {
  position: absolute;
  top: 8px;
  right: 9px;
  display: flex;
  align-items: center;
  justify-content: center;
  width: 38px;
  height: 38px;
  padding: 0;
  border: 1px solid #b5b5aa;
  border-radius: 4px;
  background: #fff;
}

.map-layers svg {
  width: 26px;
  height: 26px;
}

.map-credit {
  position: absolute;
  right: 0;
  bottom: 0;
  padding: 0 4px;
  background: rgba(255, 255, 255, .8);
  color: #333;
  font-family: "Liberation Sans", Arial, sans-serif;
  font-size: 10px;
  line-height: 14px;
}

.map-credit svg {
  width: 10px;
  height: 7px;
}

.map-credit a {
  color: #0078a8;
  text-decoration: none;
}

.map-option {
  display: flex;
  align-items: center;
  justify-content: space-between;
  margin-top: 13px;
  padding-top: 13px;
  border-top: 1px solid #c8c9ca;
  color: #333;
}

.switch {
  width: 42px;
  height: 20px;
  margin: 0;
  padding: 3px;
  border-radius: 10px;
  appearance: none;
  background: #ccc;
  cursor: pointer;
}

.switch::before {
  content: "";
  display: block;
  width: 14px;
  height: 14px;
  border-radius: 50%;
  background: #fff;
}

.switch:checked {
  background: #e6bd21;
}

.switch:checked::before {
  margin-left: auto;
}
```
